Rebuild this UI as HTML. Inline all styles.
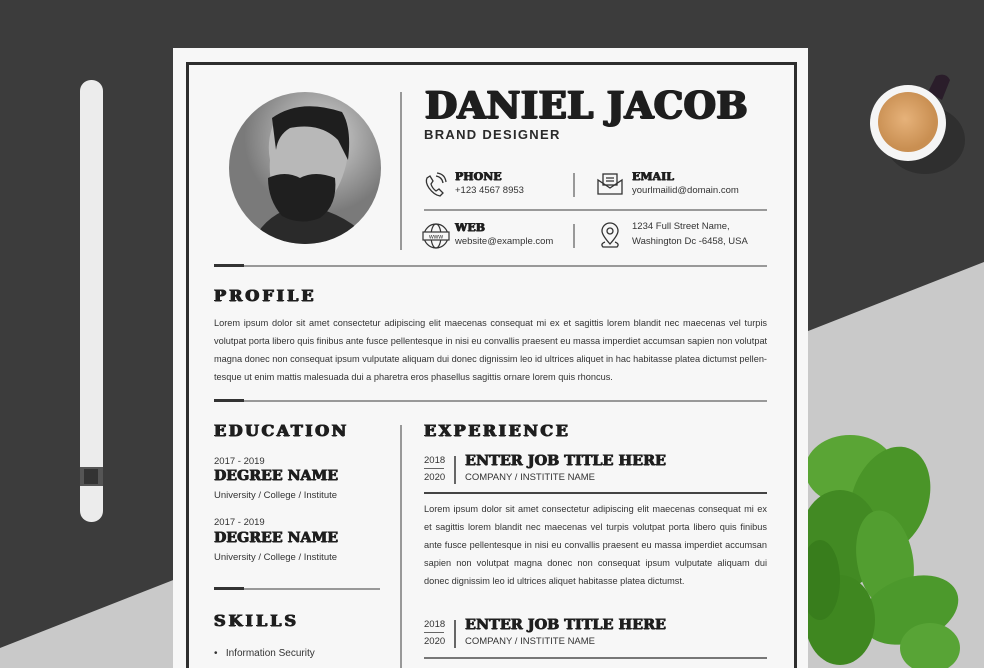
<!DOCTYPE html>
<html><head><meta charset="utf-8"><style>
*{margin:0;padding:0;box-sizing:border-box}
body{width:984px;height:668px;overflow:hidden;position:relative;background:#3b3b3b;font-family:"Liberation Sans",sans-serif;color:#2a2a2a}
.a{position:absolute;white-space:nowrap}
.sf{font-family:"DejaVu Serif","Liberation Serif",serif;font-weight:bold;color:#1e1e1e;text-shadow:0.5px 0 0 #1e1e1e,-0.5px 0 0 #1e1e1e,0 0.4px 0 #1e1e1e}
.big{text-shadow:1.2px 0 0 #1e1e1e,-1.2px 0 0 #1e1e1e,0 0.8px 0 #1e1e1e,0.8px 0.6px 0 #1e1e1e,-0.8px 0.6px 0 #1e1e1e}
.h{font-size:16px;letter-spacing:3px;text-shadow:0.7px 0 0 #1e1e1e,-0.7px 0 0 #1e1e1e,0 0.5px 0 #1e1e1e}
.sm{font-size:9.5px;color:#333}
.l{position:absolute;font-size:9.2px;height:18px;line-height:18px;text-align:justify;text-align-last:justify;color:#333;white-space:nowrap;overflow:hidden}
.ln{position:absolute;height:2px;background:#999}
.tk{position:absolute;height:3px;background:#333;width:30px}
.vl{position:absolute;width:2px;background:#999}
</style></head><body>
<svg class="a" style="left:0;top:0" width="984" height="668">
<defs><radialGradient id="cg" cx="0.45" cy="0.45"><stop offset="0" stop-color="#e6b27a"/><stop offset="1" stop-color="#c98f52"/></radialGradient>
<radialGradient id="ph" cx="0.6" cy="0.3"><stop offset="0" stop-color="#d8d8d8"/><stop offset="1" stop-color="#7a7a7a"/></radialGradient>
<clipPath id="cc"><circle cx="305" cy="168" r="76"/></clipPath></defs>
<rect width="984" height="668" fill="#3c3c3c"/>
<polygon points="0,648 984,262 984,668 0,668" fill="#c9c9c9"/>
<rect x="80" y="80" width="23" height="442" rx="11" fill="#ececec"/>
<rect x="80" y="467" width="23" height="19" fill="#555"/>
<rect x="84" y="469" width="14" height="15" fill="#333"/>
<ellipse cx="925" cy="140" rx="40" ry="34" fill="#262626" opacity="0.6"/>
<path d="M928 92 L936 76 Q946 72 950 80 L942 100 Z" fill="#2a1d2a"/>
<circle cx="908" cy="123" r="38" fill="#f5f5f5"/>
<circle cx="908" cy="122" r="30" fill="url(#cg)"/>
<g>
<ellipse cx="850" cy="470" rx="45" ry="35" fill="#5aa535"/>
<ellipse cx="890" cy="500" rx="38" ry="55" transform="rotate(20 890 500)" fill="#4a9528"/>
<ellipse cx="840" cy="540" rx="40" ry="50" fill="#428a23"/>
<ellipse cx="885" cy="560" rx="28" ry="50" transform="rotate(-10 885 560)" fill="#529e30"/>
<ellipse cx="910" cy="610" rx="50" ry="32" transform="rotate(-20 910 610)" fill="#4c992c"/>
<ellipse cx="840" cy="620" rx="35" ry="45" fill="#3f8720"/>
<ellipse cx="930" cy="648" rx="30" ry="25" fill="#58a436"/>
<ellipse cx="820" cy="580" rx="20" ry="40" fill="#387d1c"/>
</g>
<rect x="173" y="48" width="635" height="630" fill="#f7f7f7"/>
<rect x="187.5" y="63.5" width="608" height="620" fill="none" stroke="#2e2e2e" stroke-width="3"/>
<circle cx="305" cy="168" r="76" fill="url(#ph)"/>
<g clip-path="url(#cc)">
<path d="M250 250 Q260 215 300 205 Q340 210 365 235 L370 260 Z" fill="#2a2a2a"/>
<path d="M275 120 Q300 100 340 112 Q352 135 346 165 Q340 190 325 205 Q300 218 280 205 Q268 185 270 160 Q266 140 275 120Z" fill="#b8b8b8"/>
<path d="M272 118 Q300 98 342 112 Q352 128 348 160 L338 140 Q320 122 290 128 Q278 135 276 150 Z" fill="#1e1e1e"/>
<path d="M268 178 Q285 170 300 178 Q315 170 335 178 Q338 205 320 218 Q300 226 282 216 Q268 200 268 178Z" fill="#1f1f1f"/>
</g>
</svg>
<div class="vl" style="left:400px;top:92px;height:158px"></div>
<div class="a sf big" style="left:425px;top:84px;font-size:37px;line-height:42px;letter-spacing:0.4px">DANIEL JACOB</div>
<div class="a" style="left:424px;top:127px;font-size:13px;font-weight:bold;letter-spacing:1.3px;color:#2a2a2a">BRAND DESIGNER</div>
<svg class="a" style="left:423px;top:172px" width="26" height="26" fill="none" stroke="#333" stroke-width="1.3"><path d="M4 6 Q2 10 6 16 Q11 23 17 24 L20 21 L16 17 L13 19 Q9 16 8 12 L10 9 L7 4Z"/><path d="M13 4 Q19 5 20 11"/><path d="M14 1 Q22 2 23 10"/></svg>
<div class="a sf" style="left:455px;top:170px;font-size:11px">PHONE</div>
<div class="a sm" style="left:455px;top:185px">+123 4567 8953</div>
<div class="vl" style="left:573px;top:173px;height:24px"></div>
<svg class="a" style="left:596px;top:172px" width="28" height="24" fill="none" stroke="#333" stroke-width="1.3"><path d="M2 8 L2 22 L26 22 L26 8 L14 16 Z"/><rect x="7" y="2" width="14" height="11"/><path d="M10 6 H18 M10 9 H18"/></svg>
<div class="a sf" style="left:632px;top:170px;font-size:11px">EMAIL</div>
<div class="a sm" style="left:632px;top:185px">yourlmailid@domain.com</div>
<div class="ln" style="left:424px;top:209px;width:343px"></div>
<svg class="a" style="left:422px;top:222px" width="28" height="28" fill="none" stroke="#333" stroke-width="1.2"><circle cx="14" cy="14" r="12"/><ellipse cx="14" cy="14" rx="5" ry="12"/><rect x="1" y="10" width="26" height="8" fill="#f7f7f7"/><text x="14" y="16.5" font-size="6.5" text-anchor="middle" fill="#333" stroke="none" font-family="Liberation Sans">www</text></svg>
<div class="a sf" style="left:455px;top:221px;font-size:11px">WEB</div>
<div class="a sm" style="left:455px;top:236px">website@example.com</div>
<div class="vl" style="left:573px;top:224px;height:24px"></div>
<svg class="a" style="left:598px;top:222px" width="24" height="28" fill="none" stroke="#333" stroke-width="1.3"><path d="M12 22 Q4 13 4 9 A8 8 0 0 1 20 9 Q20 13 12 22Z"/><circle cx="12" cy="9" r="3"/><path d="M7 20 Q2 22 5 25 H19 Q22 22 17 20"/></svg>
<div class="a sm" style="left:632px;top:221px">1234 Full Street Name,</div>
<div class="a sm" style="left:632px;top:236px">Washington Dc -6458, USA</div>
<div class="ln" style="left:214px;top:265px;width:553px"></div><div class="tk" style="left:214px;top:264px"></div>
<div class="a sf h" style="left:214px;top:286px">PROFILE</div>
<div class="l" style="left:214px;top:314px;width:553px">Lorem ipsum dolor sit amet consectetur adipiscing elit maecenas consequat mi ex et sagittis lorem blandit nec maecenas vel turpis</div>
<div class="l" style="left:214px;top:332px;width:553px">volutpat porta libero quis finibus ante fusce pellentesque in nisi eu convallis praesent eu massa imperdiet accumsan sapien non volutpat</div>
<div class="l" style="left:214px;top:350px;width:553px">magna donec non consequat ipsum vulputate aliquam dui donec dignissim leo id ultrices aliquet in hac habitasse platea dictumst pellen-</div>
<div class="a" style="left:214px;top:368px;font-size:9.2px;line-height:18px;color:#333">tesque ut enim mattis malesuada dui a pharetra eros phasellus sagittis ornare lorem quis rhoncus.</div>
<div class="ln" style="left:214px;top:400px;width:553px"></div><div class="tk" style="left:214px;top:399px"></div>
<div class="vl" style="left:400px;top:425px;height:243px"></div>
<div class="a sf h" style="left:214px;top:421px;letter-spacing:2.5px">EDUCATION</div>
<div class="a sm" style="left:214px;top:456px">2017 - 2019</div>
<div class="a sf" style="left:214px;top:468px;font-size:14.2px">DEGREE NAME</div>
<div class="a sm" style="left:214px;top:490px">University / College / Institute</div>
<div class="a sm" style="left:214px;top:517px">2017 - 2019</div>
<div class="a sf" style="left:214px;top:530px;font-size:14.2px">DEGREE NAME</div>
<div class="a sm" style="left:214px;top:552px">University / College / Institute</div>
<div class="ln" style="left:214px;top:588px;width:166px"></div><div class="tk" style="left:214px;top:587px"></div>
<div class="a sf h" style="left:214px;top:611px">SKILLS</div>
<div class="a" style="left:214px;top:648px;font-size:10px;color:#333">•&nbsp;&nbsp;&nbsp;Information Security</div>
<div class="a sf h" style="left:424px;top:421px;letter-spacing:2.5px">EXPERIENCE</div>
<div class="a sm" style="left:424px;top:455px">2018</div>
<div class="ln" style="left:424px;top:468px;width:20px;height:1px;background:#666"></div>
<div class="a sm" style="left:424px;top:472px">2020</div>
<div class="vl" style="left:454px;top:456px;height:28px;background:#666"></div>
<div class="a sf" style="left:465px;top:452px;font-size:14.4px">ENTER JOB TITLE HERE</div>
<div class="a sm" style="left:465px;top:472px">COMPANY / INSTITITE NAME</div>
<div class="ln" style="left:424px;top:492px;width:343px;background:#444"></div>
<div class="l" style="left:424px;top:500px;width:343px">Lorem ipsum dolor sit amet consectetur adipiscing elit maecenas consequat mi ex</div>
<div class="l" style="left:424px;top:518px;width:343px">et sagittis lorem blandit nec maecenas vel turpis volutpat porta libero quis finibus</div>
<div class="l" style="left:424px;top:536px;width:343px">ante fusce pellentesque in nisi eu convallis praesent eu massa imperdiet accumsan</div>
<div class="l" style="left:424px;top:554px;width:343px">sapien non volutpat magna donec non consequat ipsum vulputate aliquam dui</div>
<div class="a" style="left:424px;top:572px;font-size:9.2px;line-height:18px;color:#333">donec dignissim leo id ultrices aliquet habitasse platea dictumst.</div>
<div class="a sm" style="left:424px;top:619px">2018</div>
<div class="ln" style="left:424px;top:632px;width:20px;height:1px;background:#666"></div>
<div class="a sm" style="left:424px;top:636px">2020</div>
<div class="vl" style="left:454px;top:620px;height:28px;background:#666"></div>
<div class="a sf" style="left:465px;top:616px;font-size:14.4px">ENTER JOB TITLE HERE</div>
<div class="a sm" style="left:465px;top:636px">COMPANY / INSTITITE NAME</div>
<div class="ln" style="left:424px;top:657px;width:343px;background:#777"></div>
</body></html>
